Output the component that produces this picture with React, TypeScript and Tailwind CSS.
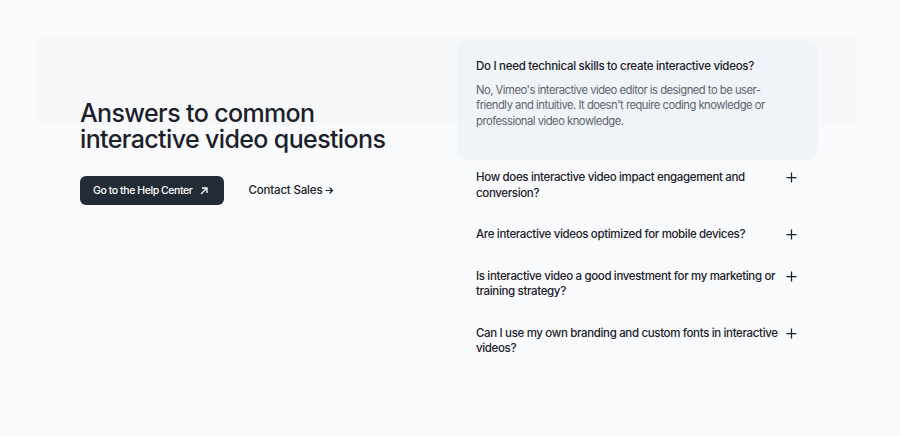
import React from "react";

const items = [
  "How does interactive video impact engagement and conversion?",
  "Are interactive videos optimized for mobile devices?",
  "Is interactive video a good investment for my marketing or training strategy?",
  "Can I use my own branding and custom fonts in interactive videos?",
];

function Plus() {
  return (
    <svg width="11" height="11" viewBox="0 0 11 11" className="shrink-0">
      <path d="M5.5 0.5v10M0.5 5.5h10" stroke="#1b202a" strokeWidth="1.25" />
    </svg>
  );
}

export default function App() {
  return (
    <div
      className="relative w-full h-[436px] bg-[#f9fafc] overflow-hidden"
      style={{ fontFamily: "Inter, 'Noto Sans', sans-serif" }}
    >
      <div className="absolute left-[37px] top-[37px] w-[825px] h-[88px] bg-[#f7f8fa]" />
      <div className="relative flex pl-[80px] pt-[40px]">
        <div className="w-[377px] shrink-0 pt-[60px]">
          <h2 className="text-[25px] leading-[26px] font-medium tracking-[-0.025em] text-[#1b202a]">
            Answers to common
            <br />
            interactive video questions
          </h2>
          <div className="flex items-center gap-[24px] mt-[24px]">
            <a className="flex items-center gap-[8px] h-[29px] pl-[13px] pr-[16px] rounded-[6px] bg-[#232b36] text-white text-[10.5px] font-medium tracking-[-0.04em]">
              Go to the Help Center
              <svg width="8" height="8" viewBox="0 0 8 8">
                <path d="M1 7L7 1M2 1h5v5" stroke="white" strokeWidth="1.3" fill="none" />
              </svg>
            </a>
            <a className="flex items-center gap-[3px] text-[11.5px] font-medium tracking-[-0.015em] text-[#1b202a]">
              Contact Sales
              <svg width="9" height="9" viewBox="0 0 9 9">
                <path d="M0.5 4.5h7M4.5 1.5l3 3-3 3" stroke="#1b202a" strokeWidth="1.2" fill="none" />
              </svg>
            </a>
          </div>
        </div>
        <div className="w-[361px] shrink-0">
          <div className="rounded-[10px] bg-[#f0f3f7] pt-[19px] pb-[31px] px-[19px]">
            <div className="text-[11.5px] leading-[15.5px] font-medium tracking-[-0.025em] text-[#1b202a]">
              Do I need technical skills to create interactive videos?
            </div>
            <p className="mt-[8px] max-w-[302px] text-[11.25px] leading-[15.5px] tracking-[-0.045em] text-[#5e6470]">
              No, Vimeo's interactive video editor is designed to be user-friendly and intuitive. It doesn't require coding knowledge or professional video knowledge.
            </p>
          </div>
          <div className="flex flex-col pt-[10px]">
            {items.map((q) => (
              <div key={q} className="flex items-start justify-between pl-[19px] pr-[21px] pb-[26px]">
                <span className="max-w-[310px] text-[11.5px] leading-[15.5px] font-medium tracking-[-0.03em] text-[#1b202a]">
                  {q}
                </span>
                <span className="pt-[2px]">
                  <Plus />
                </span>
              </div>
            ))}
          </div>
        </div>
      </div>
    </div>
  );
}
